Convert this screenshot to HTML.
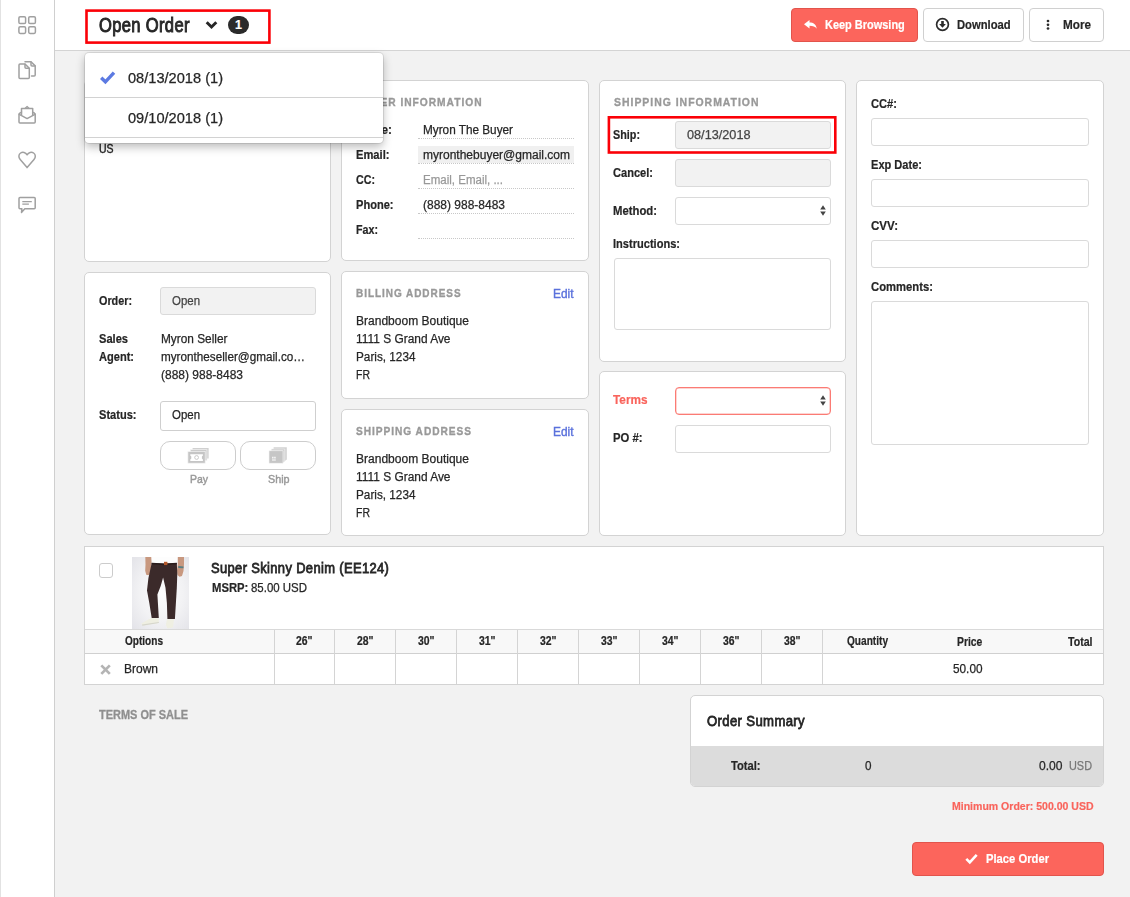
<!DOCTYPE html>
<html lang="en">
<head>
<meta charset="utf-8">
<title>Open Order</title>
<style>
*{box-sizing:border-box;margin:0;padding:0}
html,body{width:1130px;height:897px;overflow:hidden}
body{background:#f2f2f2;font-family:"Liberation Sans",sans-serif;font-size:12.5px;color:#262626;position:relative;line-height:1}
div,span,svg{position:absolute}
.t{white-space:pre;line-height:16px;height:16px;transform-origin:0 50%}
.t{-webkit-text-stroke:0.25px currentColor}
.m{-webkit-text-stroke-width:0.65px}
.b{font-weight:700;-webkit-text-stroke-width:0.2px}
.card{background:#fff;border:1px solid #d3d3d3;border-radius:5px}
.inp{border:1px solid #dadada;border-radius:3px;background:#fff}
.dis{background:#f2f2f2}
.dot{height:1px;border-top:1px dotted #c8c8c8}
.btn{border-radius:4px;border:1px solid #d0d0d0;background:#fff}
.red{background:#fc655c;border-color:#e2544c}

#side{left:0;top:0;width:55px;height:897px;background:#fff;border-right:1px solid #cfcfcf;border-left:1px solid #e2e2e2}
#top{left:55px;top:0;width:1075px;height:51px;background:#fff;border-bottom:1px solid #d4d4d4}
svg{overflow:visible}

</style>
</head>
<body>
<div id="top"></div>
<div id="side"></div>
<!-- sidebar icons -->
<svg style="left:0;top:0" width="55" height="230" viewBox="0 0 55 230" fill="none" stroke="#a0a0a0" stroke-width="1.5" stroke-linejoin="round" stroke-linecap="round"><rect x="18.900" y="16.800" width="6.700" height="6.700" rx="1.300"/><rect x="28.700" y="16.800" width="6.700" height="6.700" rx="1.300"/><rect x="18.900" y="26.700" width="6.700" height="6.700" rx="1.300"/><rect x="28.700" y="26.700" width="6.700" height="6.700" rx="1.300"/><path d="M20 64h5l4.300 4.300v9.200a1 1 0 0 1-1 1h-8.300a1 1 0 0 1-1-1v-12.500a1 1 0 0 1 1-1z"/><path d="M25 64.300v3a1 1 0 0 0 1 1h3"/><path d="M25 61.700h6l4.200 4.200v9.200a1 1 0 0 1-1 1h-2.700"/><path d="M31 62v3a1 1 0 0 0 1 1h3"/><path d="M19 114.200a1 1 0 0 1 0.500-0.900l2-1.300v-3.500h11.200v3.500l2 1.300a1 1 0 0 1 0.500 0.900v7.800a1 1 0 0 1-1 1h-14.200a1 1 0 0 1-1-1z"/><path d="M19.300 114.300l7.800 4.300 7.800-4.300"/><path d="M21.500 112v2.800M32.700 112v2.800"/><path d="M25.200 108.200l1.900-1.700 1.900 1.700" stroke-width="1.200"/><path d="M27.100 167.600l-6.900-8c-1.900-2.200-1.700-5.200 0.400-6.600 2.100-1.400 5-0.700 6.500 1.800 1.500-2.500 4.400-3.200 6.500-1.800 2.100 1.400 2.300 4.400 0.400 6.600z"/><path d="M20 197.400h14.200a1 1 0 0 1 1 1v9.400a1 1 0 0 1-1 1h-9.400l-3.300 3.600 0.400-3.600h-1.900a1 1 0 0 1-1-1v-9.400a1 1 0 0 1 1-1z"/><path d="M22.300 201.700h9.500M22.300 204.200h6.600" stroke-width="1.200" stroke-linecap="butt"/></svg>
<!-- top bar -->
<span class="t m" style="left:99.20px;top:16.80px;font-size:19.5px;letter-spacing:0.4px;-webkit-text-stroke-width:0.95px;transform:scaleX(0.8489);line-height:24px;height:24px;top:12.5px">Open Order</span>
<svg style="left:205px;top:20px" width="13" height="10" viewBox="0 0 13 10"><path d="M1.700 2.200l4.800 4.800 4.800-4.800" fill="none" stroke="#262626" stroke-width="2.900"/></svg>
<div class="abs" style="left:228px;top:16px;width:21px;height:18px;background:#2b2b2b;border-radius:9px;top:16.300px"></div>
<span class="t b" style="left:234.92px;top:17.30px;color:#fff;transform:scaleX(1.0000)">1</span>
<svg style="left:0;top:0" width="1130" height="897" viewBox="0 0 1130 897"><rect x="86.50" y="10.60" width="182.90" height="32.00" fill="none" stroke="#fb0007" stroke-width="2.6"/></svg>
<div class="btn red" style="left:791px;top:8px;width:127px;height:34px;"></div>
<svg style="left:804.300px;top:19.800px" width="12.800" height="9.300" viewBox="0 0 13 10" preserveAspectRatio="none"><path d="M5.600 0v2.700c4 0 6.600 1.900 7.400 6.700-1.800-2.400-3.700-3.200-7.400-3.200v2.900l-5.600-4.600z" fill="#fff"/></svg>
<span class="t b" style="left:825.30px;top:16.80px;font-size:13px;color:#fff;transform:scaleX(0.8433)">Keep Browsing</span>
<div class="btn" style="left:923px;top:8px;width:101px;height:34px;"></div>
<svg style="left:935px;top:17.300px" width="15" height="15" viewBox="0 0 15 15"><circle cx="7.500" cy="7.500" r="5.900" fill="none" stroke="#2b2b2b" stroke-width="1.700"/><path d="M6.200 4h2.600v3h2.100l-3.400 3.700-3.400-3.700h2.100z" fill="#2b2b2b"/></svg>
<span class="t b" style="left:957.00px;top:16.80px;font-size:13px;transform:scaleX(0.8646)">Download</span>
<div class="btn" style="left:1029px;top:8px;width:75px;height:34px;"></div>
<svg style="left:1046.100px;top:19px" width="4" height="12" viewBox="0 0 4 12"><circle cx="2" cy="2" r="1.350" fill="#2b2b2b"/><circle cx="2" cy="5.800" r="1.350" fill="#2b2b2b"/><circle cx="2" cy="9.500" r="1.350" fill="#2b2b2b"/></svg>
<span class="t b" style="left:1062.50px;top:16.80px;font-size:13px;transform:scaleX(0.9015)">More</span>
<!-- company card -->
<div class="card" style="left:84px;top:80px;width:247px;height:182px;"></div>
<span class="t" style="left:99.20px;top:141.10px;-webkit-text-stroke-width:0.4px;transform:scaleX(0.8408)">US</span>
<!-- buyer information -->
<div class="card" style="left:341px;top:80px;width:248px;height:181px;"></div>
<span class="t b" style="left:356.00px;top:93.80px;font-size:11.5px;color:#999;letter-spacing:1.1px;-webkit-text-stroke-width:0.35px;transform:scaleX(0.8882)">BUYER INFORMATION</span>
<span class="t b" style="left:356.30px;top:121.80px;transform:scaleX(0.9422)">Name:</span>
<span class="t" style="left:423.00px;top:121.80px;transform:scaleX(0.9410)">Myron The Buyer</span>
<div class="dot" style="left:418px;top:138px;width:156px;height:1px;"></div>
<div class="abs" style="left:418px;top:146px;width:156px;height:17px;background:#f0f0f0"></div>
<span class="t b" style="left:356.30px;top:146.80px;transform:scaleX(0.8930)">Email:</span>
<span class="t" style="left:423.00px;top:146.80px;transform:scaleX(0.9606)">myronthebuyer@gmail.com</span>
<div class="dot" style="left:418px;top:163px;width:156px;height:1px;"></div>
<span class="t b" style="left:356.30px;top:171.80px;transform:scaleX(0.8552)">CC:</span>
<span class="t" style="left:423.00px;top:171.80px;color:#999;transform:scaleX(0.9214)">Email, Email, ...</span>
<div class="dot" style="left:418px;top:188px;width:156px;height:1px;"></div>
<span class="t b" style="left:356.30px;top:196.50px;transform:scaleX(0.8853)">Phone:</span>
<span class="t" style="left:423.00px;top:196.50px;transform:scaleX(0.9593)">(888) 988-8483</span>
<div class="dot" style="left:418px;top:213px;width:156px;height:1px;"></div>
<span class="t b" style="left:356.30px;top:221.50px;transform:scaleX(0.8559)">Fax:</span>
<div class="dot" style="left:418px;top:238px;width:156px;height:1px;"></div>
<!-- shipping information -->
<div class="card" style="left:599px;top:80px;width:247px;height:282px;"></div>
<span class="t b" style="left:614.00px;top:93.80px;font-size:11.5px;color:#999;letter-spacing:1.1px;-webkit-text-stroke-width:0.35px;transform:scaleX(0.9069)">SHIPPING INFORMATION</span>
<span class="t b" style="left:613.10px;top:126.80px;transform:scaleX(0.8641)">Ship:</span>
<div class="inp dis" style="left:675px;top:121px;width:156px;height:28px;"></div>
<span class="t" style="left:686.50px;top:126.80px;color:#444;transform:scaleX(1.0150)">08/13/2018</span>
<svg style="left:0;top:0" width="1130" height="897" viewBox="0 0 1130 897"><rect x="608.90" y="117.30" width="226.40" height="35.20" fill="none" stroke="#fb0007" stroke-width="2.6"/></svg>
<span class="t b" style="left:613.10px;top:164.50px;transform:scaleX(0.8858)">Cancel:</span>
<div class="inp dis" style="left:675px;top:159px;width:156px;height:28px;"></div>
<span class="t b" style="left:613.10px;top:202.50px;transform:scaleX(0.9054)">Method:</span>
<div class="inp" style="left:675px;top:197px;width:156px;height:28px;"></div>
<svg style="left:820.2px;top:205.1px" width="6" height="11" viewBox="0 0 6 11"><path d="M3 0.300l2.800 4.200h-5.600zM3 10.700l2.800-4.200h-5.600z" fill="#444"/></svg>
<span class="t b" style="left:613.10px;top:235.50px;transform:scaleX(0.8851)">Instructions:</span>
<div class="inp" style="left:614px;top:258px;width:217px;height:72px;"></div>
<!-- terms / PO -->
<div class="card" style="left:599px;top:371px;width:247px;height:165px;"></div>
<span class="t b" style="left:613.30px;top:392.30px;color:#f9645c;transform:scaleX(0.9429)">Terms</span>
<div class="inp" style="left:675px;top:387px;width:156px;height:28px;border-color:#fb7b74;border-radius:4px;box-shadow:inset 0 0 0 0.5px #fcaaa5"></div>
<svg style="left:820.2px;top:395.1px" width="6" height="11" viewBox="0 0 6 11"><path d="M3 0.300l2.800 4.200h-5.600zM3 10.700l2.800-4.200h-5.600z" fill="#444"/></svg>
<span class="t b" style="left:613.30px;top:430.40px;transform:scaleX(0.9036)">PO #:</span>
<div class="inp" style="left:675px;top:425px;width:156px;height:28px;"></div>
<!-- payment card -->
<div class="card" style="left:856px;top:80px;width:248px;height:456px;"></div>
<span class="t b" style="left:871.00px;top:95.50px;transform:scaleX(0.8913)">CC#:</span>
<div class="inp" style="left:871px;top:118px;width:218px;height:28px;"></div>
<span class="t b" style="left:871.00px;top:156.50px;transform:scaleX(0.8846)">Exp Date:</span>
<div class="inp" style="left:871px;top:179px;width:218px;height:28px;"></div>
<span class="t b" style="left:871.00px;top:217.50px;transform:scaleX(0.9254)">CVV:</span>
<div class="inp" style="left:871px;top:240px;width:218px;height:28px;"></div>
<span class="t b" style="left:871.00px;top:278.50px;transform:scaleX(0.9017)">Comments:</span>
<div class="inp" style="left:871px;top:301px;width:218px;height:144px;"></div>
<!-- order status -->
<div class="card" style="left:84px;top:272px;width:247px;height:263px;"></div>
<span class="t b" style="left:99.00px;top:292.70px;transform:scaleX(0.8638)">Order:</span>
<div class="inp dis" style="left:160px;top:287px;width:156px;height:28px;"></div>
<span class="t" style="left:171.50px;top:292.70px;color:#444;transform:scaleX(0.9157)">Open</span>
<span class="t b" style="left:99.00px;top:330.70px;transform:scaleX(0.8877)">Sales</span>
<span class="t b" style="left:99.00px;top:348.70px;transform:scaleX(0.8843)">Agent:</span>
<span class="t" style="left:160.50px;top:330.70px;transform:scaleX(0.9478)">Myron Seller</span>
<span class="t" style="left:160.50px;top:348.70px;transform:scaleX(0.9368)">myrontheseller@gmail.co…</span>
<span class="t" style="left:160.50px;top:366.70px;transform:scaleX(0.9593)">(888) 988-8483</span>
<span class="t b" style="left:99.00px;top:406.60px;transform:scaleX(0.8851)">Status:</span>
<div class="inp" style="left:160px;top:401px;width:156px;height:30px;border-color:#cfcfcf"></div>
<span class="t" style="left:171.50px;top:407.00px;transform:scaleX(0.9157)">Open</span>
<div class="abs" style="left:160px;top:441px;width:76px;height:29px;border:1px solid #cdcdcd;border-radius:10px;background:#fff"></div>
<div class="abs" style="left:240px;top:441px;width:76px;height:29px;border:1px solid #cdcdcd;border-radius:10px;background:#fff"></div>
<svg style="left:187px;top:447px" width="23" height="17" viewBox="0 0 23 17"><rect x="5.600" y="1" width="16" height="10.500" fill="#d0d0d0"/><rect x="3.300" y="2.700" width="16.600" height="10.800" fill="#c9c9c9" stroke="#f4f4f4" stroke-width="0.700"/><rect x="0.900" y="4.600" width="17.300" height="11.600" fill="#c5c5c5" stroke="#f4f4f4" stroke-width="0.700"/><path d="M3.300 7.200h12.600v1.400l-1 1v1.900l1 1v1.400h-12.600v-1.400l1-1v-1.900l-1-1z" fill="#fff"/><circle cx="9.600" cy="10.500" r="1.900" fill="#fff" stroke="#c4c4c4" stroke-width="0.900"/></svg>
<svg style="left:268px;top:446px" width="20" height="18" viewBox="0 0 20 18"><path d="M5.600 1.200h13.200v12.300l-2 1.500v-11.800h-11.200z" fill="#d2d2d2"/><path d="M3.400 3h13.400v12.200l-2 1.500v-11.800h-11.400z" fill="#cbcbcb" stroke="#f4f4f4" stroke-width="0.600"/><rect x="1" y="4.800" width="14" height="12.400" fill="#c6c6c6" stroke="#f4f4f4" stroke-width="0.600"/><path d="M4.200 10.800h1.300v1.800h-1.300zM6.300 10.800h1.300v1.800h-1.300zM4 13.600h3.800v0.900h-3.800z" fill="#fff"/></svg>
<span class="t" style="left:189.50px;top:471.30px;font-size:11.5px;color:#999;-webkit-text-stroke-width:0.45px;transform:scaleX(0.9083)">Pay</span>
<span class="t" style="left:267.65px;top:471.30px;font-size:11.5px;color:#999;-webkit-text-stroke-width:0.45px;transform:scaleX(0.9341)">Ship</span>
<!-- billing address -->
<div class="card" style="left:341px;top:271px;width:248px;height:128px;"></div>
<span class="t b" style="left:356.00px;top:284.60px;font-size:11.5px;color:#999;letter-spacing:1.1px;-webkit-text-stroke-width:0.35px;transform:scaleX(0.8683)">BILLING ADDRESS</span>
<span class="t" style="left:553.10px;top:286.00px;color:#5b72dc;-webkit-text-stroke-width:0.4px;transform:scaleX(0.9517)">Edit</span>
<span class="t" style="left:356.20px;top:312.70px;transform:scaleX(0.9621)">Brandboom Boutique</span>
<span class="t" style="left:356.20px;top:330.70px;transform:scaleX(0.9531)">1111 S Grand Ave</span>
<span class="t" style="left:356.20px;top:348.70px;transform:scaleX(0.9409)">Paris, 1234</span>
<span class="t" style="left:356.20px;top:366.70px;transform:scaleX(0.8402)">FR</span>
<!-- shipping address -->
<div class="card" style="left:341px;top:409px;width:248px;height:127px;"></div>
<span class="t b" style="left:356.00px;top:422.50px;font-size:11.5px;color:#999;letter-spacing:1.1px;-webkit-text-stroke-width:0.35px;transform:scaleX(0.8817)">SHIPPING ADDRESS</span>
<span class="t" style="left:553.10px;top:424.00px;color:#5b72dc;-webkit-text-stroke-width:0.4px;transform:scaleX(0.9517)">Edit</span>
<span class="t" style="left:356.20px;top:450.60px;transform:scaleX(0.9621)">Brandboom Boutique</span>
<span class="t" style="left:356.20px;top:468.60px;transform:scaleX(0.9531)">1111 S Grand Ave</span>
<span class="t" style="left:356.20px;top:486.60px;transform:scaleX(0.9409)">Paris, 1234</span>
<span class="t" style="left:356.20px;top:504.60px;transform:scaleX(0.8402)">FR</span>
<!-- product table -->
<div class="abs" style="left:84px;top:546px;width:1020px;height:139px;background:#fff;border:1px solid #d3d3d3"></div>
<div class="abs" style="left:99px;top:563px;width:14px;height:15px;border:1px solid #ccc;border-radius:3px;background:#fff"></div>
<svg style="left:132px;top:557px;overflow:hidden" width="57" height="72" viewBox="0 0 57 72">
<defs><radialGradient id="jbg" cx="52%" cy="50%" r="70%"><stop offset="0" stop-color="#fdfdfd"/><stop offset="0.550" stop-color="#f2f2f4"/><stop offset="1" stop-color="#e4e4e9"/></radialGradient>
<filter id="jbl" x="-5%" y="-5%" width="110%" height="110%"><feGaussianBlur stdDeviation="0.500"/></filter></defs>
<rect width="57" height="72" fill="url(#jbg)"/>
<g filter="url(#jbl)">
<path d="M18.500 -1h27.500l-0.500 7.500-12.500 0.800-13.500-0.800z" fill="#fdfdfd"/>
<path d="M13.300 -1h5.900l0.400 7-0.300 5-1 5.500-1.800 1.800-2.300-0.500-1-4 0.300-6z" fill="#c8987f"/>
<path d="M45.800 -1h6.200l0 8-0.500 7-1.500 5-2.500 0.800-2-1.800-0.500-4.500 0.800-6z" fill="#c8987f"/>
<path d="M46.300 9l5.200 0.400-0.100 1.900-5.200-0.400z" fill="#587e83"/>
<path d="M19.700 6l13.300 0.800 11.800-0.800 0.500 10.500-0.500 14.500-0.900 15 -1 16.100-7.500 0-0.500-16.100-1.400-15.200-2.400-10.400-2.400 8.500-3.300 8.500 0.500 8.600 0.900 15.100-7.100 0-2.400-15.100-2.300-12.400 1.400-12.300z" fill="#3b2a2a"/>
<path d="M19.700 5.700l13.300 0.800 11.800-0.800 0.100 1.600-11.900 0.900-13.300-0.900z" fill="#2a1d1c"/>
<rect x="32" y="4.800" width="3.400" height="3.300" fill="#b5592b"/>
<path d="M9.300 66.400l7.100-3.800 3.300-1.500 7.100 0.500 0 4.300-16.100 2.800z" fill="#efefe2"/>
<path d="M34.900 62.600l7.100 0-1 8-5.600 1-1.500-3.800z" fill="#efefe2"/>
<path d="M10 67.600l16.800-2.700 0 1-16.500 2.900z" fill="#d6d6cc"/>
</g></svg>
<span class="t m" style="left:211.10px;top:560.20px;font-size:15px;letter-spacing:0.4px;-webkit-text-stroke-width:0.8px;transform:scaleX(0.8637);line-height:20px;height:20px;top:558px">Super Skinny Denim (EE124)</span>
<span class="t b" style="left:211.80px;top:580.40px;transform:scaleX(0.9012)">MSRP:</span>
<span class="t" style="left:251.00px;top:580.40px;transform:scaleX(0.9158)">85.00 USD</span>
<div class="abs" style="left:85px;top:629px;width:1018px;height:25px;background:#f8f8f8;border-top:1px solid #d9d9d9;border-bottom:1px solid #d0d0d0"></div>
<div class="abs" style="left:274px;top:630px;width:1px;height:54px;background:#d4d4d4"></div>
<div class="abs" style="left:334px;top:630px;width:1px;height:54px;background:#d4d4d4"></div>
<div class="abs" style="left:395px;top:630px;width:1px;height:54px;background:#d4d4d4"></div>
<div class="abs" style="left:456px;top:630px;width:1px;height:54px;background:#d4d4d4"></div>
<div class="abs" style="left:517px;top:630px;width:1px;height:54px;background:#d4d4d4"></div>
<div class="abs" style="left:578px;top:630px;width:1px;height:54px;background:#d4d4d4"></div>
<div class="abs" style="left:639px;top:630px;width:1px;height:54px;background:#d4d4d4"></div>
<div class="abs" style="left:700px;top:630px;width:1px;height:54px;background:#d4d4d4"></div>
<div class="abs" style="left:761px;top:630px;width:1px;height:54px;background:#d4d4d4"></div>
<div class="abs" style="left:822px;top:630px;width:1px;height:54px;background:#d4d4d4"></div>
<span class="t b" style="left:124.60px;top:633.40px;font-size:12px;transform:scaleX(0.8383)">Options</span>
<span class="t b" style="left:296.25px;top:633.40px;font-size:12px;transform:scaleX(0.8667)">26&quot;</span>
<span class="t b" style="left:356.75px;top:633.40px;font-size:12px;transform:scaleX(0.8667)">28&quot;</span>
<span class="t b" style="left:417.75px;top:633.40px;font-size:12px;transform:scaleX(0.8667)">30&quot;</span>
<span class="t b" style="left:478.75px;top:633.40px;font-size:12px;transform:scaleX(0.8667)">31&quot;</span>
<span class="t b" style="left:539.75px;top:633.40px;font-size:12px;transform:scaleX(0.8667)">32&quot;</span>
<span class="t b" style="left:600.75px;top:633.40px;font-size:12px;transform:scaleX(0.8667)">33&quot;</span>
<span class="t b" style="left:661.75px;top:633.40px;font-size:12px;transform:scaleX(0.8667)">34&quot;</span>
<span class="t b" style="left:722.75px;top:633.40px;font-size:12px;transform:scaleX(0.8667)">36&quot;</span>
<span class="t b" style="left:783.75px;top:633.40px;font-size:12px;transform:scaleX(0.8667)">38&quot;</span>
<span class="t b" style="left:846.80px;top:633.40px;font-size:12px;transform:scaleX(0.8424)">Quantity</span>
<span class="t b" style="left:957.20px;top:633.70px;font-size:12px;transform:scaleX(0.8618)">Price</span>
<span class="t b" style="left:1068.00px;top:633.70px;font-size:12px;transform:scaleX(0.8821)">Total</span>
<svg style="left:100px;top:663.600px" width="11" height="11" viewBox="0 0 11 11"><path d="M1.300 1.400l8.500 8.500M9.800 1.400l-8.500 8.500" stroke="#b4b4b4" stroke-width="2.700" fill="none"/></svg>
<span class="t" style="left:124.30px;top:661.30px;transform:scaleX(0.9596)">Brown</span>
<span class="t" style="left:952.80px;top:661.40px;transform:scaleX(0.9431)">50.00</span>
<!-- order summary -->
<span class="t b" style="left:99.00px;top:707.20px;font-size:12px;color:#8f8f8f;-webkit-text-stroke-width:0.3px;transform:scaleX(0.9143)">TERMS OF SALE</span>
<div class="card" style="left:690px;top:695px;width:414px;height:92px;overflow:hidden"><div style="left:0;top:50px;width:412px;height:40px;background:#dcdcdc"></div></div>
<span class="t m" style="left:706.80px;top:713.00px;font-size:15px;letter-spacing:0.4px;-webkit-text-stroke-width:0.8px;transform:scaleX(0.8759);line-height:20px;height:20px;top:711px">Order Summary</span>
<span class="t b" style="left:731.30px;top:758.00px;transform:scaleX(0.8914)">Total:</span>
<span class="t" style="left:864.60px;top:758.20px;transform:scaleX(0.9350)">0</span>
<span class="t" style="left:1038.80px;top:758.00px;transform:scaleX(0.9659)">0.00</span>
<span class="t" style="left:1069.30px;top:758.00px;color:#777;transform:scaleX(0.8715)">USD</span>
<span class="t b" style="left:951.50px;top:798.00px;font-size:11.5px;color:#f9645c;transform:scaleX(0.9149)">Minimum Order: 500.00 USD</span>
<div class="btn red" style="left:912px;top:842px;width:192px;height:34px;"></div>
<svg style="left:965px;top:853px" width="13" height="11" viewBox="0 0 13 11"><path d="M1.300 5.800l3.500 3.500 6.900-7.500" fill="none" stroke="#fff" stroke-width="2.600"/></svg>
<span class="t b" style="left:986.30px;top:850.80px;font-size:13px;color:#fff;transform:scaleX(0.8632)">Place Order</span>
<!-- order date dropdown -->
<div class="abs" style="left:85px;top:53px;width:298px;height:90px;background:#fff;border-radius:4px;box-shadow:0 4px 10px rgba(0,0,0,0.27),0 0 0 1px rgba(0,0,0,0.09)"></div>
<div class="abs" style="left:85px;top:97px;width:298px;height:1px;background:#d2d2d2"></div>
<div class="abs" style="left:85px;top:137px;width:298px;height:1px;background:#d2d2d2"></div>
<svg style="left:100px;top:71.300px" width="16" height="13" viewBox="0 0 16 13"><path d="M1.200 6.700l4.200 4.100 8.600-9.100" fill="none" stroke="#5c7ae2" stroke-width="3.400"/></svg>
<span class="t" style="left:128.00px;top:70.00px;font-size:14.5px;transform:scaleX(1.0072);line-height:20px;height:20px;top:68px">08/13/2018 (1)</span>
<span class="t" style="left:128.00px;top:110.00px;font-size:14.5px;transform:scaleX(1.0072);line-height:20px;height:20px;top:108px">09/10/2018 (1)</span>
</body>
</html>
